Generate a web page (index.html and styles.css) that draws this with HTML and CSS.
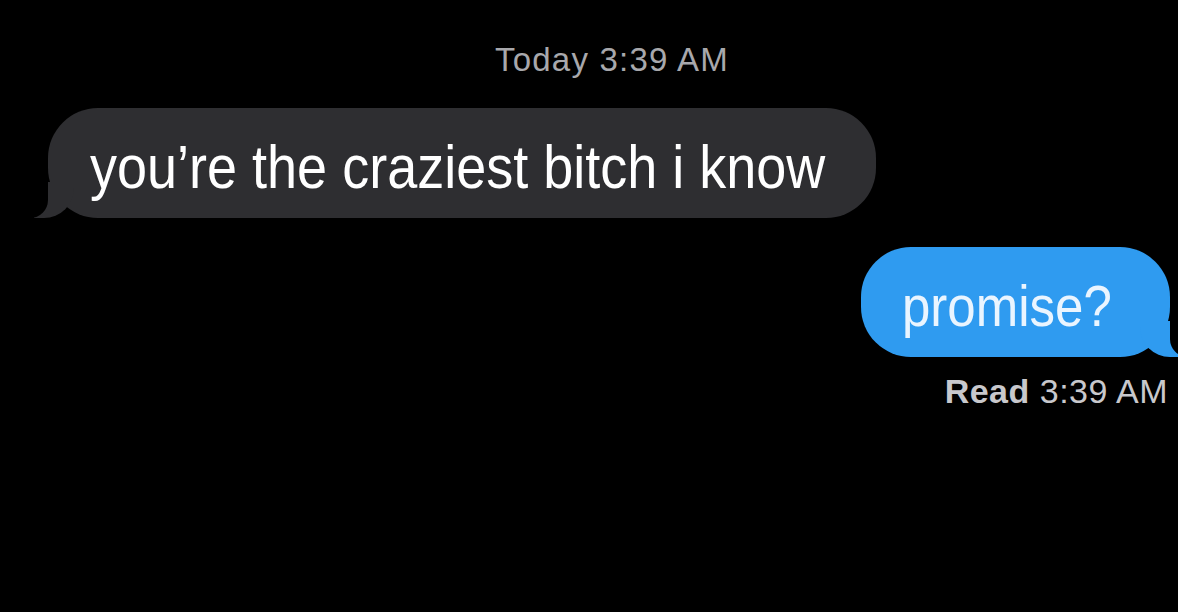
FILE: index.html
```html
<!DOCTYPE html>
<html>

<head>
    <meta charset="utf-8">
    <title>Messages</title>
    <link rel="stylesheet" href="styles.css">
</head>

<body>

<div class="thread">
    <div class="stamp">Today 3:39 AM</div>
    <div class="row row-in">
        <div class="bubble bubble-in"><span class="txt">you’re the craziest bitch i know</span></div>
    </div>
    <div class="row row-out">
        <div class="bubble bubble-out"><span class="txt">promise?</span></div>
    </div>
    <div class="receipt"><b>Read</b> 3:39 AM</div>
</div>

</body>

</html>
```

FILE: styles.css
```css
html,
body {
    margin: 0;
    padding: 0;
    background: #000;
    font-family: "Liberation Sans", Arial, sans-serif;
}

.thread {
    display: flex;
    flex-direction: column;
    padding: 41px 8px 0 48px;
}

.stamp {
    align-self: center;
    margin-left: 6px;
    color: #a8a8ac;
    font-size: 33px;
    letter-spacing: 1.2px;
    line-height: 37px;
}

.receipt b {
    font-weight: 600;
}

.row {
    display: flex;
}

.row-in {
    margin-top: 30px;
}

.row-out {
    justify-content: flex-end;
    margin-top: 29px;
}

.bubble {
    position: relative;
    display: flex;
    align-items: center;
    color: #fff;
    height: 110px;
    border-radius: 50px;
}

.txt {
    display: inline-block;
    transform: scaleY(1.13);
    margin-top: 8px;
}

.bubble-in {
    width: 786px;
    padding-left: 42px;
    font-size: 54px;
    background: #2e2e31;
}

.bubble-out {
    width: 268px;
    padding-left: 41px;
    font-size: 51px;
    background: #2f9bf0;
    color: #eaf5ff;
}

/* tails */
.bubble-in::before,
.bubble-in::after,
.bubble-out::before,
.bubble-out::after {
    content: "";
    position: absolute;
    bottom: 0;
    height: 36px;
}

.bubble-in::before {
    left: -14px;
    width: 40px;
    background: #2e2e31;
    border-bottom-right-radius: 30px;
}

.bubble-in::after {
    left: -24px;
    width: 24px;
    background: #000;
    border-bottom-right-radius: 18px;
}

.bubble-out::before {
    right: -10px;
    width: 40px;
    background: #2f9bf0;
    border-bottom-left-radius: 30px;
}

.bubble-out::after {
    right: -26px;
    width: 26px;
    background: #000;
    border-bottom-left-radius: 18px;
}

.receipt {
    align-self: flex-end;
    margin-top: 14px;
    margin-right: 2px;
    color: #c8c8cc;
    font-size: 34px;
    letter-spacing: 0.5px;
    line-height: 40px;
}
```
